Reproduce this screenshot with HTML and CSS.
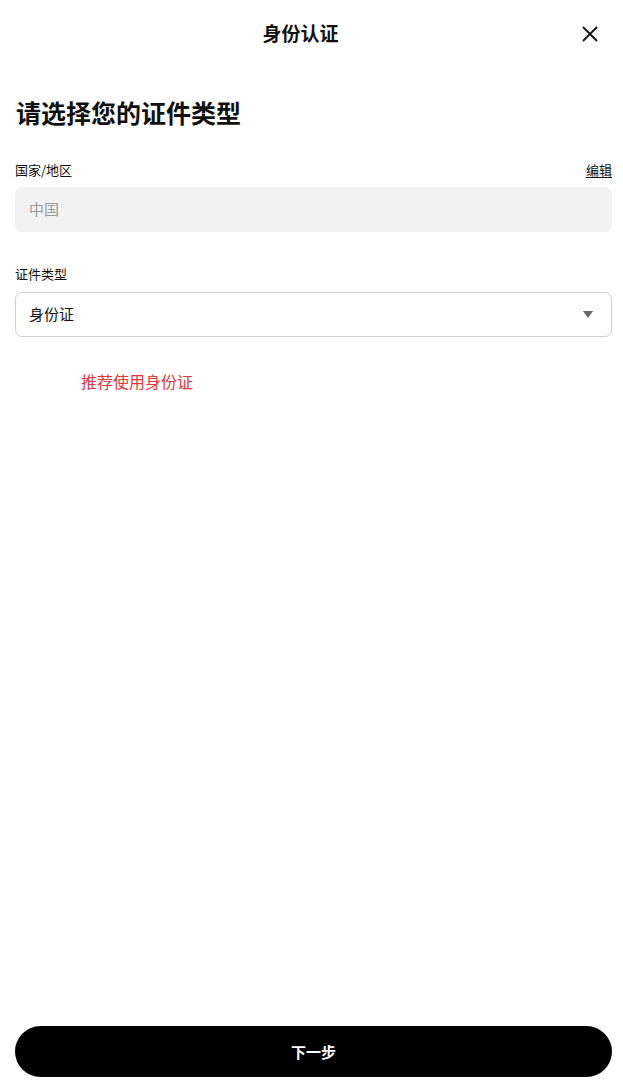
FILE: index.html
```html
<!DOCTYPE html>
<html lang="zh-CN">
<head>
<meta charset="utf-8">
<title>身份认证</title>
<link rel="stylesheet" href="styles.css">
</head>
<body>
<div class="page">
  <header class="topbar">
    <h1 class="topbar-title">身份认证</h1>
    <button class="close-btn" aria-label="关闭">
      <svg width="18" height="18" viewBox="0 0 18 18"><path d="M2 2L16 16M16 2L2 16" stroke="#111" stroke-width="1.8" fill="none"/></svg>
    </button>
  </header>
  <main class="content">
    <h2 class="heading">请选择您的证件类型</h2>
    <div class="field-head">
      <span class="label">国家/地区</span>
      <a class="edit-link">编辑</a>
    </div>
    <div class="readonly-box">中国</div>
    <div class="field-head second">
      <span class="label">证件类型</span>
    </div>
    <div class="select-box">
      <span>身份证</span>
      <span class="caret"></span>
    </div>
    <p class="hint">推荐使用身份证</p>
  </main>
  <footer class="footer">
    <button class="next-btn">下一步</button>
  </footer>
</div>
</body>
</html>
```

FILE: styles.css
```css
* { box-sizing: border-box; }
html, body { margin: 0; padding: 0; background: #fff; }
body {
  font-family: "Noto Sans CJK SC", "Noto Sans", sans-serif;
  color: #111;
}
.page {
  height: 1084px;
  display: flex;
  flex-direction: column;
}
.topbar {
  height: 68px;
  display: flex;
  align-items: center;
  justify-content: center;
  padding: 0 22px 2px 0;
  position: relative;
}
.topbar-title {
  margin: 0;
  font-size: 19px;
  font-weight: 700;
  line-height: 26px;
}
.close-btn {
  position: absolute;
  right: 24px;
  top: 25px;
  width: 18px;
  height: 18px;
  padding: 0;
  border: 0;
  background: none;
  display: flex;
}
.content {
  padding: 0 11px 0 15px;
  display: flex;
  flex-direction: column;
}
.heading {
  margin: 27px 0 0 1px;
  font-size: 25px;
  line-height: 34px;
  font-weight: 700;
}
.field-head {
  margin-top: 32px;
  display: flex;
  justify-content: space-between;
  align-items: center;
  height: 18px;
}
.field-head.second { margin-top: 33px; }
.label {
  font-size: 13px;
  line-height: 18px;
  font-weight: 400;
}
.edit-link {
  font-size: 13px;
  line-height: 18px;
  font-weight: 400;
  text-decoration: underline;
  text-underline-offset: 2px;
  color: #111;
}
.readonly-box {
  margin-top: 8px;
  height: 45px;
  border-radius: 7px;
  background: #f2f2f2;
  color: #9a9a9a;
  font-size: 15px;
  display: flex;
  align-items: center;
  padding: 0 0 3px 14px;
}
.select-box {
  margin-top: 9px;
  height: 45px;
  border: 1px solid #cfcfcf;
  border-radius: 7px;
  display: flex;
  align-items: center;
  justify-content: space-between;
  padding: 0 18px 3px 13px;
  font-size: 15px;
  color: #111;
}
.caret {
  width: 0;
  height: 0;
  margin-top: 3px;
  border-left: 5.5px solid transparent;
  border-right: 5.5px solid transparent;
  border-top: 7px solid #666;
}
.hint {
  margin: 33px 0 0 66px;
  font-size: 16px;
  line-height: 22px;
  color: #e0383c;
}
.footer {
  margin-top: auto;
  padding: 0 11px 7px 15px;
}
.next-btn {
  width: 100%;
  height: 51px;
  border: 0;
  border-radius: 26px;
  background: #000;
  color: #fff;
  font-family: "Noto Sans CJK SC", "Noto Sans", sans-serif;
  font-size: 15px;
  font-weight: 700;
}
```
